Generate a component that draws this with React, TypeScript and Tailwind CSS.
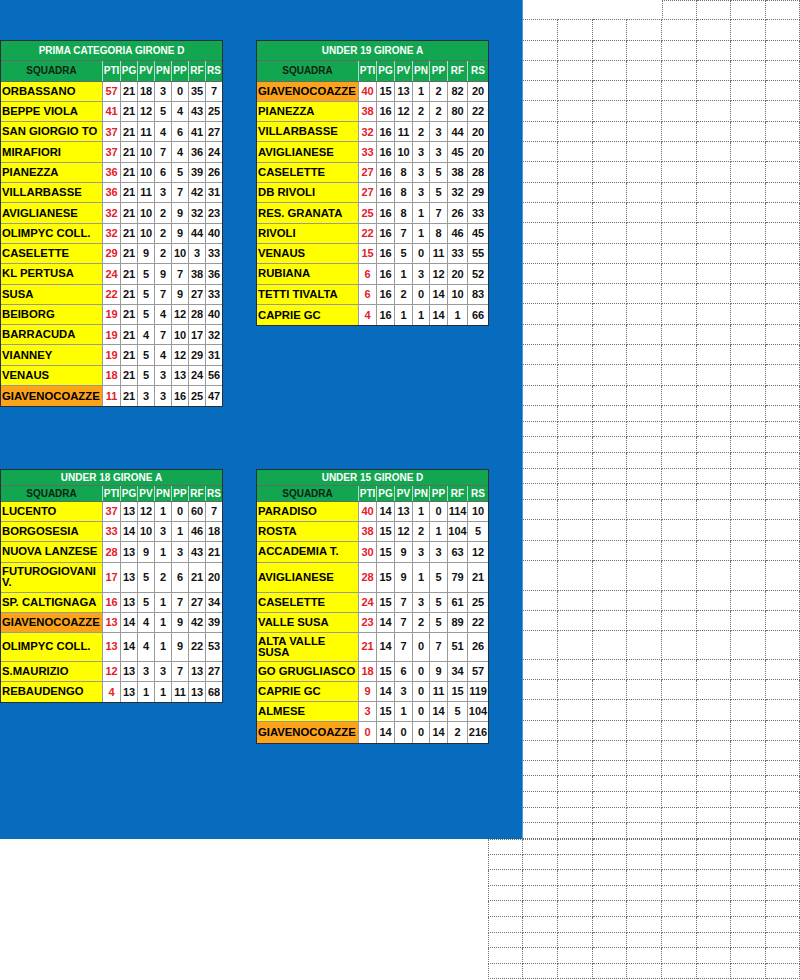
import clsx from 'clsx';

type TeamRow = {
	team: string;
	pts: number;
	stats: number[];
	own?: boolean;
	tall?: boolean;
};

const HEAD = ['SQUADRA', 'PTI', 'PG', 'PV', 'PN', 'PP', 'RF', 'RS'];

const narrowCols = ['w-[102px]', 'w-[18px]', 'w-[17px]', 'w-[17px]', 'w-[17px]', 'w-[17px]', 'w-[17px]', 'w-[16px]'];
const wideCols = ['w-[102px]', 'w-[18px]', 'w-[18px]', 'w-[18px]', 'w-[17px]', 'w-[18px]', 'w-[20px]', 'w-[20px]'];

const prima: TeamRow[] = [
	{ team: 'ORBASSANO', pts: 57, stats: [21, 18, 3, 0, 35, 7] },
	{ team: 'BEPPE VIOLA', pts: 41, stats: [21, 12, 5, 4, 43, 25] },
	{ team: 'SAN GIORGIO TO', pts: 37, stats: [21, 11, 4, 6, 41, 27] },
	{ team: 'MIRAFIORI', pts: 37, stats: [21, 10, 7, 4, 36, 24] },
	{ team: 'PIANEZZA', pts: 36, stats: [21, 10, 6, 5, 39, 26] },
	{ team: 'VILLARBASSE', pts: 36, stats: [21, 11, 3, 7, 42, 31] },
	{ team: 'AVIGLIANESE', pts: 32, stats: [21, 10, 2, 9, 32, 23] },
	{ team: 'OLIMPYC COLL.', pts: 32, stats: [21, 10, 2, 9, 44, 40] },
	{ team: 'CASELETTE', pts: 29, stats: [21, 9, 2, 10, 3, 33] },
	{ team: 'KL PERTUSA', pts: 24, stats: [21, 5, 9, 7, 38, 36] },
	{ team: 'SUSA', pts: 22, stats: [21, 5, 7, 9, 27, 33] },
	{ team: 'BEIBORG', pts: 19, stats: [21, 5, 4, 12, 28, 40] },
	{ team: 'BARRACUDA', pts: 19, stats: [21, 4, 7, 10, 17, 32] },
	{ team: 'VIANNEY', pts: 19, stats: [21, 5, 4, 12, 29, 31] },
	{ team: 'VENAUS', pts: 18, stats: [21, 5, 3, 13, 24, 56] },
	{ team: 'GIAVENOCOAZZE', pts: 11, stats: [21, 3, 3, 16, 25, 47], own: true },
];

const under19: TeamRow[] = [
	{ team: 'GIAVENOCOAZZE', pts: 40, stats: [15, 13, 1, 2, 82, 20], own: true },
	{ team: 'PIANEZZA', pts: 38, stats: [16, 12, 2, 2, 80, 22] },
	{ team: 'VILLARBASSE', pts: 32, stats: [16, 11, 2, 3, 44, 20] },
	{ team: 'AVIGLIANESE', pts: 33, stats: [16, 10, 3, 3, 45, 20] },
	{ team: 'CASELETTE', pts: 27, stats: [16, 8, 3, 5, 38, 28] },
	{ team: 'DB RIVOLI', pts: 27, stats: [16, 8, 3, 5, 32, 29] },
	{ team: 'RES. GRANATA', pts: 25, stats: [16, 8, 1, 7, 26, 33] },
	{ team: 'RIVOLI', pts: 22, stats: [16, 7, 1, 8, 46, 45] },
	{ team: 'VENAUS', pts: 15, stats: [16, 5, 0, 11, 33, 55] },
	{ team: 'RUBIANA', pts: 6, stats: [16, 1, 3, 12, 20, 52] },
	{ team: 'TETTI TIVALTA', pts: 6, stats: [16, 2, 0, 14, 10, 83] },
	{ team: 'CAPRIE GC', pts: 4, stats: [16, 1, 1, 14, 1, 66] },
];

const under18: TeamRow[] = [
	{ team: 'LUCENTO', pts: 37, stats: [13, 12, 1, 0, 60, 7] },
	{ team: 'BORGOSESIA', pts: 33, stats: [14, 10, 3, 1, 46, 18] },
	{ team: 'NUOVA LANZESE', pts: 28, stats: [13, 9, 1, 3, 43, 21] },
	{ team: 'FUTUROGIOVANI V.', pts: 17, stats: [13, 5, 2, 6, 21, 20], tall: true },
	{ team: 'SP. CALTIGNAGA', pts: 16, stats: [13, 5, 1, 7, 27, 34] },
	{ team: 'GIAVENOCOAZZE', pts: 13, stats: [14, 4, 1, 9, 42, 39], own: true },
	{ team: 'OLIMPYC COLL.', pts: 13, stats: [14, 4, 1, 9, 22, 53] },
	{ team: 'S.MAURIZIO', pts: 12, stats: [13, 3, 3, 7, 13, 27] },
	{ team: 'REBAUDENGO', pts: 4, stats: [13, 1, 1, 11, 13, 68] },
];

const under15: TeamRow[] = [
	{ team: 'PARADISO', pts: 40, stats: [14, 13, 1, 0, 114, 10] },
	{ team: 'ROSTA', pts: 38, stats: [15, 12, 2, 1, 104, 5] },
	{ team: 'ACCADEMIA T.', pts: 30, stats: [15, 9, 3, 3, 63, 12] },
	{ team: 'AVIGLIANESE', pts: 28, stats: [15, 9, 1, 5, 79, 21] },
	{ team: 'CASELETTE', pts: 24, stats: [15, 7, 3, 5, 61, 25] },
	{ team: 'VALLE SUSA', pts: 23, stats: [14, 7, 2, 5, 89, 22] },
	{ team: 'ALTA VALLE SUSA', pts: 21, stats: [14, 7, 0, 7, 51, 26], tall: true },
	{ team: 'GO GRUGLIASCO', pts: 18, stats: [15, 6, 0, 9, 34, 57] },
	{ team: 'CAPRIE GC', pts: 9, stats: [14, 3, 0, 11, 15, 119] },
	{ team: 'ALMESE', pts: 3, stats: [15, 1, 0, 14, 5, 104] },
	{ team: 'GIAVENOCOAZZE', pts: 0, stats: [14, 0, 0, 14, 2, 216], own: true },
];

// rows of the sheet behind the lower tables
const lowerHeights = [
	'h-[20.3px]',
	'h-[20.3px]',
	'h-[20.4px]',
	'h-[30px]',
	'h-[20px]',
	'h-[20px]',
	'h-[29px]',
	'h-[20.2px]',
	'h-[20.3px]',
	'h-[20.3px]',
	'h-[20.5px]',
];
const upperHeights = Array.from({ length: 16 }, () => 'h-[20.3px]');

function Standings({
	title,
	rows,
	cols,
	heights,
	titleH,
	headH,
}: {
	title: string;
	rows: TeamRow[];
	cols: string[];
	heights: string[];
	titleH: string;
	headH: string;
}) {
	return (
		<div className="shrink-0 border border-[#252f3a] bg-white">
			<div
				className={clsx(
					titleH,
					'flex items-center justify-center border-b border-[#5c6e62] bg-[#12a650] text-[10px] font-bold text-white',
				)}
			>
				{title}
			</div>
			<div className={clsx(headH, 'flex border-b border-[#5c6e62] bg-[#12a650] text-[10px] font-bold')}>
				{HEAD.map((label, i) => (
					<div
						key={label}
						className={clsx(
							cols[i],
							'flex shrink-0 items-center justify-center',
							i < 7 && 'border-r border-[#b7d8c1]',
							i === 0 ? 'text-[#0c2414]' : 'text-white',
						)}
					>
						{label}
					</div>
				))}
			</div>
			{rows.map((row, ri) => (
				<div
					key={row.team}
					className={clsx(heights[ri], 'flex', ri < rows.length - 1 && 'border-b border-[#9a9a9a]')}
				>
					<div
						className={clsx(
							cols[0],
							'flex shrink-0 items-center border-r border-[#9a9a9a] pl-px text-[11.3px] font-bold text-black',
							row.own ? 'bg-[#fba31a]' : 'bg-[#ffff00]',
							row.tall ? 'leading-[11px]' : 'whitespace-nowrap',
						)}
					>
						{row.team}
					</div>
					<div
						className={clsx(
							cols[1],
							'flex shrink-0 items-center justify-center border-r border-[#9a9a9a] text-[11px] font-bold text-[#e3202a]',
						)}
					>
						{row.pts}
					</div>
					{row.stats.map((value, i) => (
						<div
							key={i}
							className={clsx(
								cols[i + 2],
								'flex shrink-0 items-center justify-center text-[11px] font-bold text-[#111]',
								i < 5 && 'border-r border-[#9a9a9a]',
							)}
						>
							{value}
						</div>
					))}
				</div>
			))}
		</div>
	);
}

const sheetCols = ['w-[35px]', 'w-[35px]', 'w-[34px]', 'w-[35px]', 'w-[35px]', 'w-[34px]', 'w-[35px]', 'w-[34px]'];

const sheetRows = [
	...Array.from({ length: 20 }, () => 'h-[20.3px]'),
	...Array.from({ length: 6 }, () => 'h-[15.67px]'),
	'h-[20.33px]',
	'h-[20.33px]',
	'h-[20.34px]',
	'h-[30px]',
	'h-[20px]',
	'h-[20px]',
	'h-[29px]',
	'h-[20.25px]',
	'h-[20.25px]',
	'h-[20.25px]',
	'h-[20.25px]',
	'h-[20px]',
	...Array.from({ length: 5 }, () => 'h-[15.6px]'),
];

const line = 'border-dotted border-[#6f6f6f]';

function SheetRight() {
	return (
		<div className="flex w-[277px] flex-col">
			{sheetRows.map((h, ri) => (
				<div key={ri} className={clsx(h, 'flex')}>
					{sheetCols.map((w, ci) => {
						const blank = ri === 0 && ci < 4;
						return (
							<div
								key={ci}
								className={clsx(
									w,
									'shrink-0 border-b',
									line,
									!blank && 'border-r',
									ri === 0 && ci >= 4 && 'border-t',
									ri === 0 && ci === 4 && 'border-l',
								)}
							/>
						);
					})}
				</div>
			))}
		</div>
	);
}

function SheetBottom() {
	const cols = ['w-[35px]', ...sheetCols];
	return (
		<div className="ml-[488px] flex flex-col">
			{Array.from({ length: 9 }, (_, ri) => (
				<div key={ri} className="flex h-[15.6px]">
					{cols.map((w, ci) => (
						<div
							key={ci}
							className={clsx(w, 'shrink-0 border-r border-b', line, ri === 0 && 'border-t', ci === 0 && 'border-l')}
						/>
					))}
				</div>
			))}
		</div>
	);
}

export default function App() {
	return (
		<div className="h-[980px] w-[800px] overflow-hidden bg-white font-[family-name:'Liberation_Sans',Arial,sans-serif]">
			<div className="flex">
				<div className="flex h-[839px] w-[523px] shrink-0 flex-col border-r border-[#4c9be0] bg-[#076cbe] pt-[40px]">
					<div className="flex h-[429px] items-start gap-[33px]">
						<Standings
							title="PRIMA CATEGORIA GIRONE D"
							rows={prima}
							cols={narrowCols}
							heights={upperHeights}
							titleH="h-[20.3px]"
							headH="h-[20.3px]"
						/>
						<Standings
							title="UNDER 19 GIRONE A"
							rows={under19}
							cols={wideCols}
							heights={upperHeights}
							titleH="h-[20.3px]"
							headH="h-[20.3px]"
						/>
					</div>
					<div className="flex items-start gap-[33px]">
						<Standings
							title="UNDER 18 GIRONE A"
							rows={under18}
							cols={narrowCols}
							heights={lowerHeights}
							titleH="h-[15.6px]"
							headH="h-[16px]"
						/>
						<Standings
							title="UNDER 15 GIRONE D"
							rows={under15}
							cols={wideCols}
							heights={lowerHeights}
							titleH="h-[15.6px]"
							headH="h-[16px]"
						/>
					</div>
				</div>
				<SheetRight />
			</div>
			<SheetBottom />
		</div>
	);
}
